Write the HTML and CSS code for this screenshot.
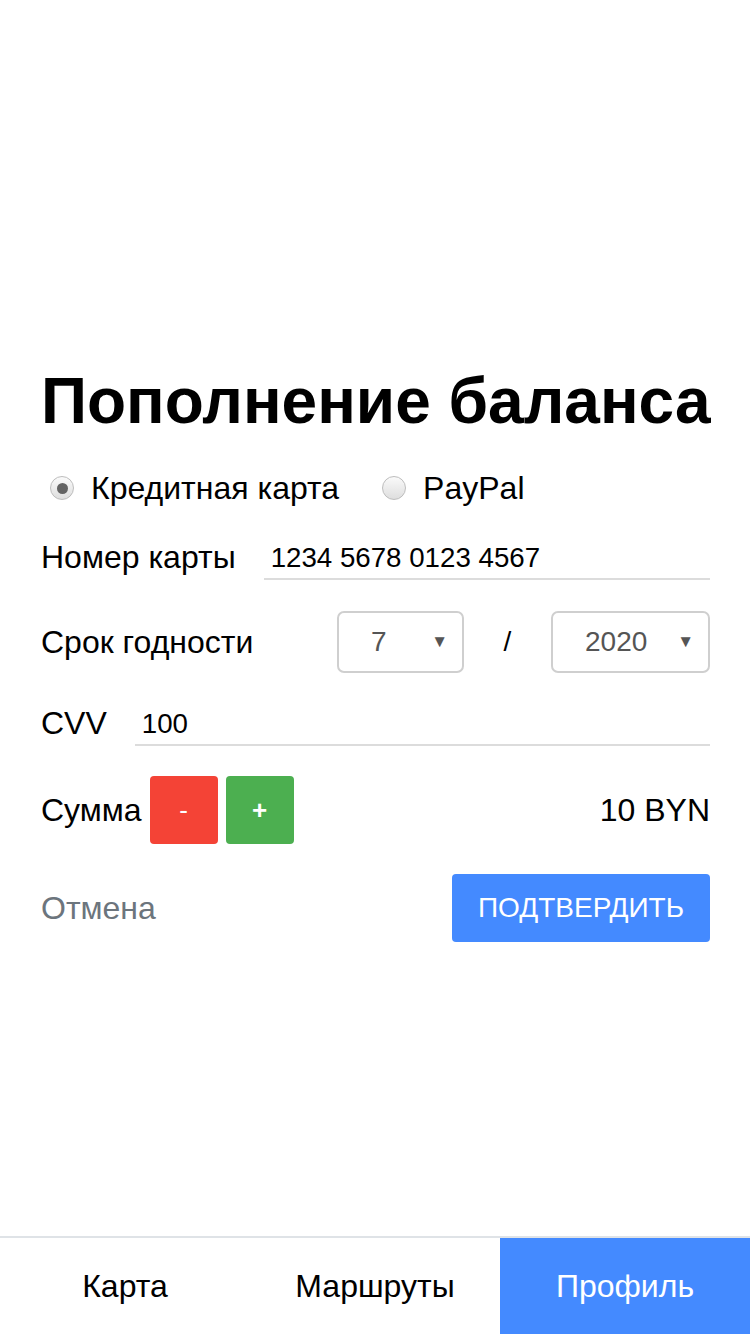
FILE: index.html
```html
<!DOCTYPE html>
<html lang="ru">
<head>
<meta charset="utf-8">
<title>Пополнение баланса</title>
<link rel="stylesheet" href="styles.css">
</head>
<body>
<div class="page">
  <main class="content">
    <h1 class="title">Пополнение баланса</h1>
    <div class="row radios">
      <label class="radio-item"><input type="radio" name="pay" class="radio" checked><span>Кредитная карта</span></label>
      <label class="radio-item"><input type="radio" name="pay" class="radio"><span>PayPal</span></label>
    </div>
    <div class="row field card">
      <span class="label">Номер карты</span>
      <input class="line-input card-input" type="text" value="1234 5678 0123 4567">
    </div>
    <div class="row expiry">
      <span class="label grow">Срок годности</span>
      <div class="select month"><span class="sel-value">7</span><span class="arrow">▼</span></div>
      <span class="slash">/</span>
      <div class="select year"><span class="sel-value">2020</span><span class="arrow">▼</span></div>
    </div>
    <div class="row field cvv">
      <span class="label">CVV</span>
      <input class="line-input cvv-input" type="text" value="100">
    </div>
    <div class="row sum">
      <span class="label">Сумма</span>
      <button class="sq-btn minus">-</button>
      <button class="sq-btn plus">+</button>
      <span class="amount">10 BYN</span>
    </div>
    <div class="row actions">
      <span class="cancel">Отмена</span>
      <button class="confirm">ПОДТВЕРДИТЬ</button>
    </div>
  </main>
  <nav class="nav">
    <a class="tab">Карта</a>
    <a class="tab">Маршруты</a>
    <a class="tab active">Профиль</a>
  </nav>
</div>
</body>
</html>
```

FILE: styles.css
```css
* { box-sizing: border-box; }
html, body { margin: 0; padding: 0; background: #fff; }
body {
  font-family: "Liberation Sans", Arial, sans-serif;
  color: #000;
}
.page {
  width: 750px;
  height: 1334px;
  display: flex;
  flex-direction: column;
}
.content {
  flex: 1;
  padding: 361px 40px 0 41px;
  display: flex;
  flex-direction: column;
}
.title {
  margin: 0;
  font-size: 64px;
  font-weight: bold;
  line-height: 80px;
  height: 80px;
  white-space: nowrap;
}
.row {
  display: flex;
  align-items: center;
  font-size: 32px;
}
.radios {
  margin-top: 17px;
  height: 60px;
  gap: 43px;
  padding-left: 9px;
}
.radio-item {
  display: flex;
  align-items: center;
  gap: 17px;
}
.radio {
  appearance: none;
  -webkit-appearance: none;
  margin: 0;
  width: 24px;
  height: 24px;
  border-radius: 50%;
  border: 1px solid #bdbdbd;
  background: linear-gradient(#fafafa, #dedede);
  display: flex;
  align-items: center;
  justify-content: center;
}
.radio:checked::after {
  content: "";
  width: 11px;
  height: 11px;
  border-radius: 50%;
  background: #636363;
}
.field {
  height: 45px;
  margin-top: 17px;
}
.line-input {
  flex: 1;
  min-width: 0;
  height: 45px;
  border: none;
  border-bottom: 2px solid #dcdcdc;
  outline: none;
  font-family: "Liberation Sans", Arial, sans-serif;
  font-size: 27.7px;
  color: #000;
  padding: 2px 0 0 7px;
  background: transparent;
}
.card-input { margin-left: 28px; }
.cvv-input { margin-left: 28px; }
.cvv { margin-top: 28px; }
.expiry {
  margin-top: 31px;
  height: 62px;
}
.grow { flex: 1; }
.select {
  height: 62px;
  border: 2px solid #cfcfcf;
  border-radius: 7px;
  display: flex;
  align-items: center;
  justify-content: space-between;
  padding: 0 14px 0 32px;
  color: #555;
  font-size: 28px;
}
.month { width: 127px; }
.year { width: 159px; }
.arrow { font-size: 17px; color: #555; }
.slash {
  width: 87px;
  text-align: center;
  font-size: 28px;
}
.sum {
  margin-top: 30px;
  height: 68px;
}
.sq-btn {
  width: 68px;
  height: 68px;
  border: none;
  border-radius: 4px;
  color: #fff;
  font-family: "Liberation Sans", Arial, sans-serif;
  font-size: 26px;
  padding: 0;
}
.minus { background: #f44336; margin-left: 8px; }
.plus { background: #4caf50; margin-left: 8px; font-weight: bold; }
.amount { margin-left: auto; }
.actions {
  margin-top: 30px;
  height: 68px;
  justify-content: space-between;
}
.cancel { color: #6c757d; }
.confirm {
  width: 258px;
  height: 68px;
  border: none;
  border-radius: 4px;
  background: #448aff;
  color: #fff;
  font-family: "Liberation Sans", Arial, sans-serif;
  font-size: 28px;
  padding: 0;
}
.nav {
  height: 98px;
  border-top: 2px solid #dfe3e7;
  display: flex;
}
.tab {
  flex: 1;
  display: flex;
  align-items: center;
  justify-content: center;
  font-size: 32px;
  color: #000;
}
.tab.active {
  background: #448aff;
  color: #fff;
}
```
